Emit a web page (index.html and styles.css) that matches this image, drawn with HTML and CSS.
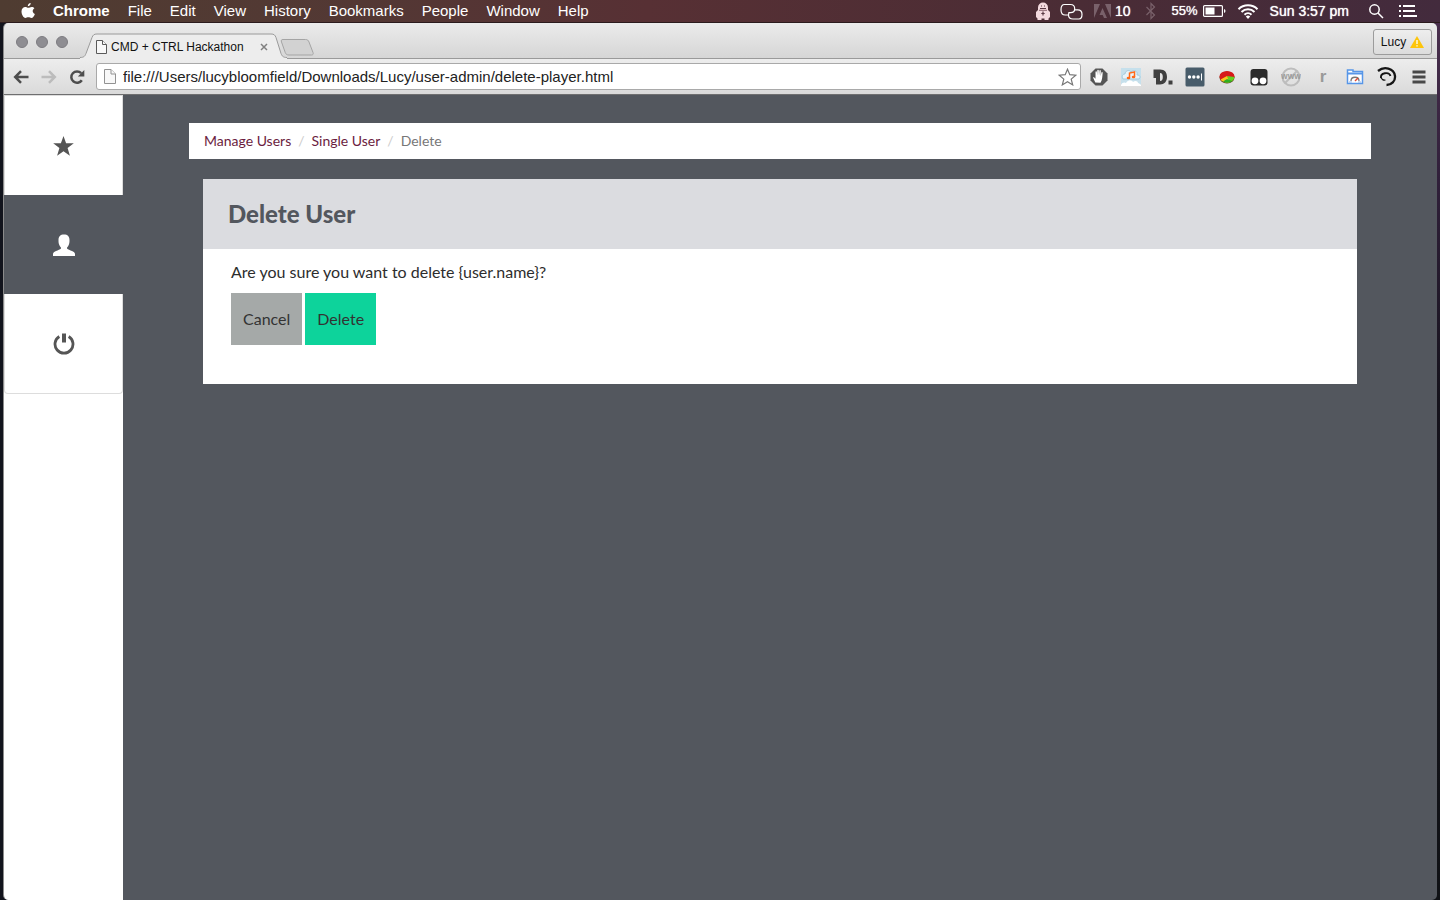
FILE: index.html
```html
<!DOCTYPE html>
<html lang="en">
<head>
<meta charset="utf-8">
<meta name="viewport" content="width=device-width, initial-scale=1">
<title>CMD + CTRL Hackathon</title>
<link rel="stylesheet" href="styles.css">
</head>
<body class="desktop">
<header class="menubar">
  <nav class="menus" aria-label="Application menu">
    <button class="menu apple" aria-label="Apple menu"><svg width="14" height="18" viewBox="0 0 14 18" fill="#fff"><path d="M9.700 1c.1 1.700-1.300 3.200-2.900 3.300C6.600 2.700 8.100 1.200 9.700 1zM13.400 6.200c-2.500 1.500-2.100 4.700.5 5.700-.7 2-2 4.100-3.500 4.100-1.200 0-1.600-.7-3-.7s-1.900.7-3 .7C2.400 16 .5 12.500.5 9.600.5 6.600 2.300 5 4.300 5c1.300 0 2.100.8 3.100.8.9 0 1.800-.9 3.300-.9 1.100 0 2.100.5 2.700 1.300z"/></svg></button>
    <button class="menu app">Chrome</button>
    <button class="menu">File</button>
    <button class="menu">Edit</button>
    <button class="menu">View</button>
    <button class="menu">History</button>
    <button class="menu">Bookmarks</button>
    <button class="menu">People</button>
    <button class="menu">Window</button>
    <button class="menu">Help</button>
  </nav>
  <div class="status">
    <svg width="16" height="20" viewBox="0 0 16 20"><path d="M3 9V6.500a5 5 0 0 1 10 0V9l2 2v5l-1.500 1.500v1.500h-4v-1.500h-3V19h-4v-1.500L1 16v-5z" fill="#f3d9de"/><path d="M5 7.500h6M6 5h1M9 5h1M8 10.500v4M6.300 12.500h3.400" stroke="#5a3a44" stroke-width="1.200"/><path d="M4 9.300h8" stroke="#8a6670"/></svg>
    <svg class="chat" width="23" height="20" viewBox="0 0 23 20" fill="none" stroke="#fff" stroke-width="1.200"><path d="M8.500 14H5.200c-2.700 0-4.200-2.300-4.200-5.300S2 3.500 4.500 3.500h6c2.800 0 4.200 1.500 4.200 4.200 0 2.800-1.500 4-4.200 4H8.500"/><path d="M14.700 8.800h3c2.900 0 4.300 1.500 4.300 4.500s-.7 4.700-3 4.700h-6c-3 0-4.500-1-4.500-4 0-1 .2-1.700.6-2.300"/></svg>
    <span class="adobe"><svg width="17" height="16" viewBox="0 0 17 16" fill="#79616a"><path d="M0 1h6L0 15zM11 1h6v14zM8.500 5l4.500 10h-3l-1.300-3H5.500z"/></svg>10</span>
    <svg class="bt" width="12" height="18" viewBox="0 0 12 18" fill="none" stroke="#79616a" stroke-width="1.200"><path d="M1.500 5l8 8L6 16.500v-15L9.500 5l-8 8"/></svg>
    <span class="battery">55%<svg width="23" height="14" viewBox="0 0 23 14"><rect x=".6" y="1.600" width="18.800" height="10.800" rx="1" fill="none" stroke="#fff" stroke-width="1.200"/><path d="M2.500 3.500h9v7h-9zM21 5c2 .8 2 3.200 0 4z" fill="#fff"/></svg></span>
    <svg width="22" height="18" viewBox="0 0 22 18" fill="none" stroke="#fff" stroke-width="2"><path d="M1.500 7.200c5.200-5.200 13.800-5.200 19 0M4.500 10c3.700-3.700 9.300-3.700 13 0M7.500 12.800c2-2 5-2 7 0"/><path d="M8.800 14.500c1.200-1.200 3.200-1.200 4.400 0L11 17z" fill="#fff" stroke="none"/></svg>
    <span>Sun 3:57 pm</span>
    <button class="menu search" aria-label="Search"><svg width="16" height="16" viewBox="0 0 16 16" fill="none" stroke="#fff" stroke-width="1.500"><circle cx="6.500" cy="6.500" r="4.700"/><path d="M10 10l5 5"/></svg></button>
    <button class="menu" aria-label="Notifications"><svg width="18" height="14" viewBox="0 0 18 14" stroke="#fff" stroke-width="2"><path d="M4 2h12M4 7h12M4 12h14M0 2h2M0 7h2M0 12h2"/></svg></button>
  </div>
</header>
<div class="window">
  <div class="tabstrip">
    <div class="lights"><button aria-label="Close"></button><button aria-label="Minimise"></button><button aria-label="Zoom"></button></div>
    <div class="tab">
      <svg class="tab-shape" width="207" height="26" viewBox="0 0 207 26"><path d="M0 24.500c4 0 5-1.500 6-4L12 4.500C13 2 14 1 17 1h174c3 0 4 1 5 3.500l5 16c1 2.500 2 4 6 4V26H0z" fill="#ededed"/><path d="M0 24.500c4 0 5-1.500 6-4L12 4.500C13 2 14 1 17 1h174c3 0 4 1 5 3.500l5 16c1 2.500 2 4 6 4" fill="none" stroke="#9a9a9a"/></svg>
      <svg class="tab-doc" width="11" height="14" viewBox="0 0 11 14" fill="#f8f8f8" stroke="#5a5a5a"><path d="M.5.5h6l4 4v9H.5z"/><path d="M6.500.5v4h4"/></svg>
      <span class="tab-title">CMD + CTRL Hackathon</span>
      <button class="tab-close" aria-label="Close tab"><svg width="8" height="8" viewBox="0 0 8 8" stroke="#808080" stroke-width="1.500"><path d="M1 1l6 6M7 1l-6 6"/></svg></button>
    </div>
    <button class="newtab" aria-label="New tab"><svg width="34" height="17" viewBox="0 0 34 17"><path d="M3 .5h22.500c2 0 2.800.8 3.500 2.500l4 10.500c.6 1.700 0 2.500-1.500 2.500H9c-2 0-3-.6-3.700-2.300L1.500 3C.9 1.300 1.300.5 3 .5z" fill="#d2d2d2" stroke="#a4a4a4"/></svg></button>
    <button class="profile">Lucy <svg width="14" height="12" viewBox="0 0 14 12"><path d="M7 0l7 12H0z" fill="#fdc50b"/><path d="M7 4v4M7 9.200v1.300" stroke="#fff" stroke-width="1.300"/></svg></button>
  </div>
  <div class="toolbar">
    <button class="nav-btn" aria-label="Back"><svg width="16" height="14" viewBox="0 0 16 14" fill="none" stroke="#4d4d4d" stroke-width="2.500"><path d="M15.500 7H2.500M8 1.200L2.200 7 8 12.800"/></svg></button>
    <button class="nav-btn" aria-label="Forward"><svg width="16" height="14" viewBox="0 0 16 14" fill="none" stroke="#bcbcbc" stroke-width="2.500"><path d="M.5 7h13M8 1.200L13.800 7 8 12.800"/></svg></button>
    <button class="nav-btn" aria-label="Reload"><svg width="16" height="16" viewBox="0 0 16 16"><path d="M12.800 11.200a5.700 5.700 0 1 1-.6-7" fill="none" stroke="#4d4d4d" stroke-width="2.500"/><path d="M15.300 1v6.500H8.800z" fill="#4d4d4d"/></svg></button>
    <div class="address">
      <svg width="12" height="15" viewBox="0 0 12 15" fill="#f8f8f8" stroke="#929292"><path d="M.5.5H7l4.500 4.500v9.500H.5z"/><path d="M7 .5V5h4.500"/></svg>
      <input class="url" type="text" aria-label="Address" value="file:///Users/lucybloomfield/Downloads/Lucy/user-admin/delete-player.html">
      <button class="bookmark" aria-label="Bookmark this page"><svg width="19" height="18" viewBox="0 0 19 18" fill="#fff" stroke="#777" stroke-width="1.200"><path d="M9.500 1.200l2.300 5.500 6 .5-4.600 3.900 1.500 5.800-5.200-3.100-5.200 3.100 1.500-5.800L1.200 7.200l6-.5z"/></svg></button>
    </div>
    <div class="extensions">
      <button aria-label="Ad blocker"><svg width="20" height="20" viewBox="0 0 20 20"><path d="M6.500 1.500h7l5 5v7l-5 5h-7l-5-5v-7z" fill="#555"/><path d="M6.300 15.500L4 10.500c.8-.8 1.500 0 2.500 1.200V5c0-1 1.300-1 1.400 0l.2 3.500.2-5c0-1 1.400-1 1.500 0l.2 5 .4-4.700c.1-1 1.400-.9 1.400.1l-.1 5 .7-3.300c.2-1 1.400-.7 1.300.2-.4 3-.2 7.200-2.200 10z" fill="#fff"/></svg></button>
      <button aria-label="Cloud music"><svg width="20" height="20" viewBox="0 0 20 20"><path d="M0 1h20v18H0z" fill="#c6e0ec"/><path d="M2 12c-2-3 0-5 2-5 0-3 4-5 6-2 3-3 7-1 6 3 3 0 4 2 2 4z" fill="#e9f3f8" stroke="#a5cadb"/><path d="M0 18c1-3 4-3 5-2 2-4 6-3 7-1 2-2 5-1 5 1 1 0 2 1 3 2v1H0z" fill="#fff"/><path d="M8.500 11V6l5-1v5" fill="none" stroke="#ff6b1a" stroke-width="1.500"/><ellipse cx="7.500" cy="11" rx="1.800" ry="1.300" fill="#ff6b1a"/><ellipse cx="12.500" cy="10" rx="1.800" ry="1.300" fill="#ff6b1a"/></svg></button>
      <button aria-label="Disconnect"><svg width="20" height="20" viewBox="0 0 20 20" fill="#404040"><path fill-rule="evenodd" d="M.5 2.500H7c5 0 7 3 7 7.500s-2.500 7.500-7 7.500H3V11H.5zM7 6v8c2 0 2.800-1.500 2.800-4S9 6 7 6zM15.500 13.500h4v4h-4z"/></svg></button>
      <button aria-label="Password manager"><svg width="20" height="20" viewBox="0 0 20 20"><rect x=".5" y=".5" width="19" height="19" rx="1.500" fill="#485c6a"/><g fill="#fff"><circle cx="4.500" cy="10" r="1.700"/><circle cx="8.800" cy="10" r="1.700"/><circle cx="13.100" cy="10" r="1.700"/><path d="M16 6.500h1v7h-1z"/></g></svg></button>
      <button aria-label="Colour picker"><svg width="20" height="20" viewBox="0 0 20 20"><ellipse cx="10" cy="10.500" rx="7.500" ry="6" fill="#5b3f21"/><ellipse cx="10" cy="9.500" rx="7.500" ry="5.500" fill="#d71919"/><path d="M10 9l7.400 1c0 3-3 5-6 5.500z" fill="#65cf21"/><path d="M10 9l2.500 6.500c-4 .8-7.500-.8-9-3z" fill="#fac51c"/><path d="M10 12l-4 2.500c3 2 7 1.500 9-.5z" fill="#2faf22"/></svg></button>
      <button aria-label="User scripts"><svg width="20" height="20" viewBox="0 0 20 20"><rect x="1.500" y="2" width="17" height="16.500" rx="3" fill="#2b2b2b"/><circle cx="6" cy="13.800" r="3.400" fill="#fff"/><circle cx="14" cy="13.800" r="3.400" fill="#fff"/></svg></button>
      <button class="www" aria-label="Web off"><svg width="20" height="20" viewBox="0 0 20 20" fill="none"><circle cx="10" cy="10" r="8.500" stroke="#bdbdbd" stroke-width="2"/><path d="M4 16L16 4" stroke="#bdbdbd" stroke-width="2"/><text x="10" y="12" text-anchor="middle" class="www-text">WWW</text></svg></button>
      <button class="letter">r</button>
      <button aria-label="Speed dial"><svg width="20" height="20" viewBox="0 0 20 20"><path d="M2.500 4V3H8v1.500h9.500v12h-15z" fill="#fff" stroke="#5796e8" stroke-width="1.500"/><path d="M2 6.500h16" stroke="#5796e8" stroke-width="2"/><path d="M6 14c0-5 8-5 8 0" fill="none" stroke="#777" stroke-width="1.300"/><path d="M10 14l3-3" stroke="#e34834" stroke-width="1.500"/><path d="M4 15h3M13 15h3" stroke="#8bb5ee"/></svg></button>
      <button aria-label="Swirl"><svg width="20" height="20" viewBox="0 0 20 20" fill="none" stroke="#161616"><path d="M1 4C7-1 17 1 18 9c.5 5-3.500 9-8.500 9" stroke-width="2.300"/><path d="M4 11c-1-5 8-7 9.500-2" stroke-width="1.800"/><path d="M4 10c.5 2.500 2.500 3.500 4.500 3" stroke-width="1.200"/></svg></button>
      <button aria-label="Menu"><svg width="20" height="20" viewBox="0 0 20 20" stroke="#484848" stroke-width="3"><path d="M3.500 5h13M3.500 10h13M3.500 15h13"/></svg></button>
    </div>
  </div>
  <div class="page">
    <nav class="sidebar" aria-label="Sections">
      <a class="side-link" href="#" aria-label="Challenges"><svg width="22" height="20" viewBox="0 0 22 20" fill="#555"><path d="M10.500 0l2.600 7.300H20.800l-6.200 4.800 2.300 7.600-6.400-4.500-6.400 4.500 2.300-7.600L.2 7.300h7.700z"/></svg></a>
      <a class="side-link active" href="#" aria-label="Users"><svg width="22" height="22" viewBox="0 0 22 22" fill="#fff"><path d="M11 .5c3.700 0 5.500 2 5.500 5.500 0 2-.1 3.300-.6 4.500-.5 1.500-1.400 2.500-1.900 3.200v.8c1 1 3 1.700 5 2.500 2.200 1 3 1.800 3 3.200V22H0v-1.800c0-1.400.8-2.200 3-3.200 2-.8 4-1.500 5-2.500v-.8c-.5-.7-1.400-1.700-1.900-3.200-.5-1.200-.6-2.500-.6-4.500C5.500 2.500 7.300.5 11 .5z"/></svg></a>
      <a class="side-link" href="#" aria-label="Log out"><svg width="22" height="22" viewBox="0 0 22 22" fill="none" stroke="#555"><path d="M6.300 3.500a9 9 0 1 0 9.400 0" stroke-width="2.800"/><path d="M11 .5v9" stroke-width="4"/></svg></a>
    </nav>
    <main class="content">
      <ol class="breadcrumb">
        <li><a href="#">Manage Users</a></li>
        <li><a href="#">Single User</a></li>
        <li aria-current="page">Delete</li>
      </ol>
      <section class="panel">
        <h1 class="panel-title">Delete User</h1>
        <div class="panel-body">
          <p class="question">Are you sure you want to delete {user.name}?</p>
          <div class="actions">
            <button class="btn">Cancel</button>
            <button class="btn confirm">Delete</button>
          </div>
        </div>
      </section>
    </main>
  </div>
</div>
</body>
</html>
```
FILE: styles.css
```css
* { box-sizing: border-box; }
button { border: 0; background: none; padding: 0; margin: 0; font: inherit; color: inherit; }
svg { display: block; flex: none; }

.desktop {
  margin: 0;
  min-height: 100vh;
  display: flex;
  flex-direction: column;
  font-family: "Liberation Sans", Arial, sans-serif;
  background: linear-gradient(90deg, #12141d 50%, transparent 50%), linear-gradient(#4d3150, #30203a 180px, #15131c 400px, #101216);
}

/* System menu bar */
.menubar {
  height: 23px;
  display: flex;
  justify-content: space-between;
  align-items: center;
  padding: 0 23px 1px 20px;
  font-size: 15px;
  color: #fff;
  text-shadow: 0 0 1px #fff;
  background: linear-gradient(90deg, #4f3c31, #533834 25%, #573034 45%, #4a2c35 75%, #432b3d);
  border-bottom: 1px solid #2b1b1d;
}
.menus, .status { display: flex; align-items: center; gap: 18px; white-space: nowrap; }
.menu.app { font-weight: bold; text-shadow: none; }
.menu.apple { padding-left: 1px; }
.status { gap: 11px; font-size: 14px; }
.status .chat { margin-left: -2px; }
.adobe, .battery { display: flex; align-items: center; gap: 4px; }
.battery { font-size: 13px; gap: 5px; }
.bt { margin: 0 4px 0 3px; }
.search { margin: 0 4px 0 8px; }

/* Browser window */
.window {
  flex: 1;
  display: flex;
  flex-direction: column;
  margin: 0 3px;
  border-left: 1px solid #8b8b8b;
  border-radius: 5px;
  overflow: hidden;
  background: #53575e;
}
.tabstrip {
  height: 36px;
  display: flex;
  align-items: flex-end;
  padding: 0 5px 0 12px;
  background: linear-gradient(#ebebeb, #d6d6d6);
  border-bottom: 1px solid #9a9a9a;
}
.lights { display: flex; gap: 8px; align-self: center; padding-top: 2px; }
.lights button { width: 12px; height: 12px; border-radius: 50%; background: #8e8d92; border: 1px solid #7d7c81; }
.tab {
  position: relative;
  width: 207px;
  height: 25px;
  margin-left: 12px;
  padding: 2px 19px 0 16px;
  display: flex;
  align-items: center;
  gap: 4px;
  font-size: 12px;
  color: #111;
}
.tab-shape { position: absolute; left: 0; top: 0; }
.tab-doc, .tab-title, .tab-close { position: relative; }
.tab-title { flex: 1; min-width: 0; white-space: nowrap; }
.newtab { align-self: center; margin-top: 13px; margin-left: -7px; }
.profile {
  margin: 0 0 3px auto;
  height: 26px;
  width: 59px;
  display: flex;
  align-items: center;
  justify-content: center;
  gap: 4px;
  font-size: 12px;
  color: #111;
  border: 1px solid #9c9c9c;
  border-radius: 3px;
  background: linear-gradient(#eee, #dcdcdc);
}
.toolbar {
  height: 36px;
  display: flex;
  align-items: center;
  padding: 0 8px 0 9px;
  background: linear-gradient(#ededed, #dadada);
  border-bottom: 1px solid #6f6f70;
}
.nav-btn { margin-right: 12px; }
.nav-btn + .nav-btn + .nav-btn { margin-right: 11px; }
.address {
  flex: 1;
  height: 27px;
  margin-right: 8px;
  padding: 0 3px 0 7px;
  display: flex;
  align-items: center;
  gap: 7px;
  background: #fff;
  border: 1px solid #a9a9a9;
  border-radius: 3px;
}
.url { flex: 1; min-width: 0; border: 0; padding: 0; outline: 0; background: none; font: 15px "Liberation Sans", Arial, sans-serif; color: #222; }
.extensions { display: flex; gap: 12px; }
.extensions button { width: 20px; height: 20px; }
.extensions .letter { font-size: 17px; font-weight: bold; line-height: 20px; color: #999; }
.www-text { font: bold 7px "Liberation Sans", Arial, sans-serif; fill: #999; }

/* Web page */
.page { flex: 1; display: flex; font-family: Lato, sans-serif; }
.sidebar { width: 119px; flex: none; background: #fff; }
.side-link {
  position: relative;
  height: 100px;
  display: flex;
  align-items: center;
  justify-content: center;
  background: #fff;
  border: 1px solid #ddd;
}
.side-link:first-child { border-bottom: 0; }
.side-link:last-child { border-top: 0; border-radius: 0 0 4px 4px; }
.side-link.active { background: #53575e; border-color: #53575e; margin-bottom: -1px; }
.content { flex: 1; padding: 28px 66px; }
.breadcrumb {
  display: flex;
  list-style: none;
  margin: 0 0 20px;
  padding: 8px 15px;
  background: #fff;
  font-size: 14px;
  line-height: 20px;
  color: #777;
}
.breadcrumb li + li::before { content: "/"; padding: 0 7px; color: #ccc; }
.breadcrumb a { color: #6b1d40; text-decoration: none; }
.panel { margin: 0 14px; background: #fff; }
.panel-title {
  margin: 0;
  padding: 20px 25px;
  font-family: "Lato Black", Lato, sans-serif;
  font-size: 24px;
  line-height: 30px;
  font-weight: 900;
  color: #53575e;
  background: #dbdce0;
}
.panel-body { padding: 12px 28px 39px; font-size: 16px; color: #2d2d2d; }
.question { margin: 0 0 10px; line-height: 22px; }
.actions { display: flex; gap: 3px; }
.btn { height: 52px; padding: 0 12px 2px; color: #333; background: #a5a9a8; }
.btn.confirm { background: #0dd39b; }
```
